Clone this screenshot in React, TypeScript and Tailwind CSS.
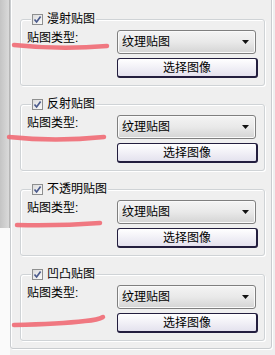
import React from 'react';

const groups = ['漫射贴图', '反射贴图', '不透明贴图', '凹凸贴图'];

function CheckBox() {
  return (
    <div className="w-[11px] h-[11px] border border-[#8e8f8f] bg-gradient-to-br from-[#dcdcdc] to-[#fbfbfb] flex items-center justify-center">
      <svg width="9" height="9" viewBox="0 0 9 9">
        <path d="M1.5 4.5 L3.6 7 L7.6 1.6" fill="none" stroke="#4a5a8c" strokeWidth="1.7" />
      </svg>
    </div>
  );
}

function MapGroup({ title }: { title: string }) {
  return (
    <div className="relative pt-[6px]">
      <div className="h-[67px] border border-[#cfd3d6] rounded-[3px] shadow-[inset_1px_1px_0_#ffffff,1px_1px_0_#ffffff] pt-[10px] pb-[7px] pl-[6px] flex flex-col">
        <div className="flex items-start">
          <span className="w-[90px] text-[12px] leading-[16px] text-black">贴图类型:</span>
          <div className="w-[139px] h-[24px] border border-[#7f7f7f] rounded-[3px] bg-gradient-to-b from-[#f4f4f4] via-[#e9e9e9] to-[#d4d4d4] shadow-[inset_0_0_0_1px_#fafafa] flex items-center justify-between pl-[4px] pr-[6px]">
            <span className="text-[12px] text-black">纹理贴图</span>
            <svg width="7" height="4" viewBox="0 0 7 4">
              <path d="M0 0 H7 L3.5 4 Z" fill="#111" />
            </svg>
          </div>
        </div>
        <div className="mt-[4px] ml-[90px] w-[141px] h-[20px] border border-[#231e3e] border-b-2 border-r-2 rounded-[3px] bg-gradient-to-b from-[#ffffff] to-[#e4e2ee] flex items-center justify-center">
          <span className="text-[12px] leading-none text-black">选择图像</span>
        </div>
      </div>
      <div className="absolute left-[11px] top-0 -mt-[0px] px-[1px] bg-[#efefef] flex items-center gap-[4px] h-[12px]">
        <CheckBox />
        <span className="text-[12px] leading-[12px] text-black">{title}</span>
      </div>
    </div>
  );
}

export default function App() {
  return (
    <div
      className="w-[275px] h-[355px] bg-[#efefef] flex overflow-hidden relative"
      style={{ fontFamily: '"Liberation Sans", "Noto Sans CJK SC", sans-serif' }}
    >
      <div className="w-[10px] flex flex-col">
        <div className="h-[228px] bg-gradient-to-r from-[#c4c4c4] to-[#dadada] border-r border-[#b5b5b5]" />
        <div className="flex-1 bg-[#fafafa]" />
      </div>
      <div className="flex flex-col">
        <div className="w-[262px] h-[362px] -mt-[13px] border border-[#c9cccf] rounded-[3px] shadow-[inset_1px_1px_0_#ffffff,1px_1px_0_#ffffff] relative pl-[9px] pt-[25px] flex flex-col gap-[12px]">
          <div className="absolute left-[9px] -top-[9px] px-[1px] text-[12px] text-[#333] tracking-[2px]">贴图 设置</div>
          {groups.map((g) => (
            <div key={g} className="w-[245px]">
              <MapGroup title={g} />
            </div>
          ))}
        </div>
      </div>
      <svg className="absolute inset-0 pointer-events-none" width="275" height="355" viewBox="0 0 275 355">
        <g fill="none" stroke="#f06a74" strokeWidth="4.5" strokeLinecap="round" strokeOpacity="0.9">
          <path d="M14 45 Q60 50 107 46" />
          <path d="M9 137 Q55 142 104 137" />
          <path d="M17 225 Q60 226 100 223" />
          <path d="M14 325 Q60 324 85 321 Q98 320 103 317" />
        </g>
      </svg>
    </div>
  );
}
